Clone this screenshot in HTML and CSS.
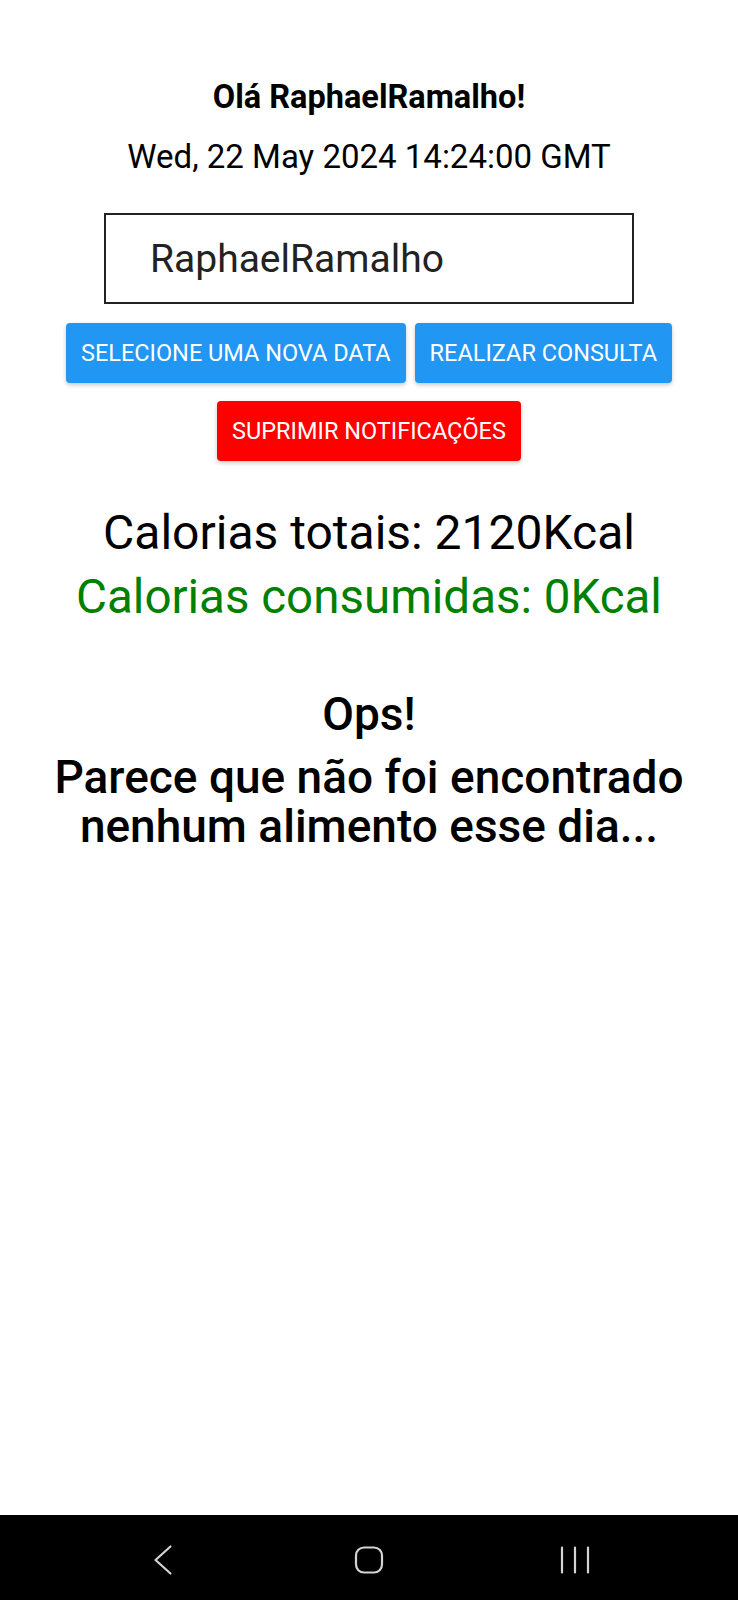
FILE: index.html
```html
<!DOCTYPE html>
<html lang="pt">
<head>
<meta charset="utf-8">
<link rel="stylesheet" href="styles.css">
</head>
<body>
<div class="screen">
  <main class="content">
    <h1 class="greeting">Olá RaphaelRamalho!</h1>
    <p class="date">Wed, 22 May 2024 14:24:00 GMT</p>
    <div class="input-box"><span class="input-text">RaphaelRamalho</span></div>
    <div class="btn-row">
      <button class="btn btn-blue">SELECIONE UMA NOVA DATA</button>
      <button class="btn btn-blue">REALIZAR CONSULTA</button>
    </div>
    <div class="btn-row btn-row-2">
      <button class="btn btn-red">SUPRIMIR NOTIFICAÇÕES</button>
    </div>
    <p class="cal cal-total">Calorias totais: 2120Kcal</p>
    <p class="cal cal-consumed">Calorias consumidas: 0Kcal</p>
    <div class="empty">
      <p class="ops">Ops!</p>
      <p class="msg">Parece que não foi encontrado nenhum alimento esse dia...</p>
    </div>
  </main>
  <nav class="navbar">
    <svg class="nav-icon" width="40" height="40" viewBox="0 0 40 40"><path d="M27.5 6.5 L12.5 20 L27.5 33.5" fill="none" stroke="#d4d4d4" stroke-width="2.2" stroke-linecap="round" stroke-linejoin="round"/></svg>
    <svg class="nav-icon" width="40" height="40" viewBox="0 0 40 40"><rect x="7" y="7.5" width="26" height="25" rx="8" fill="none" stroke="#d4d4d4" stroke-width="2.2"/></svg>
    <svg class="nav-icon" width="40" height="40" viewBox="0 0 40 40"><path d="M7 7.5V32.5M20 7.5V32.5M33 7.5V32.5" fill="none" stroke="#d4d4d4" stroke-width="2.2" stroke-linecap="round"/></svg>
  </nav>
</div>
</body>
</html>
```
FILE: styles.css
```css
* { box-sizing: border-box; }
html, body { margin: 0; padding: 0; background: #fff; }
body { font-family: Roboto, "Noto Sans", sans-serif; color: #000; }
.screen { width: 738px; height: 1600px; display: flex; flex-direction: column; }
.content { flex: 1; display: flex; flex-direction: column; align-items: center; padding-top: 77px; }
.greeting { margin: 0; font-size: 32.5px; font-weight: 700; line-height: 40px; }
.date { margin: 20px 0 0; font-size: 33px; line-height: 40px; }
.input-box { margin-top: 36px; width: 530px; height: 91px; border: 2px solid #222; display: flex; align-items: center; padding-left: 44px; }
.input-text { font-size: 39px; color: #222; }
.btn-row { display: flex; gap: 9px; margin-top: 19px; }
.btn-row-2 { margin-top: 18px; }
.btn { border: none; border-radius: 4px; height: 60px; padding: 0 15px; color: #fff; font-family: Roboto, sans-serif; font-size: 23.5px; box-shadow: 0 2px 4px rgba(0,0,0,0.22); }
.btn-blue { background: #2196f3; }
.btn-red { background: #ff0000; }
.cal { margin: 0; font-size: 48px; line-height: 64px; }
.cal-total { margin-top: 40px; }
.cal-consumed { color: #008000; font-size: 47.5px; }
.empty { margin-top: 60px; text-align: center; }
.ops { margin: 0; font-size: 46px; font-weight: 500; line-height: 50px; }
.msg { margin: 14px auto 0; width: 680px; font-size: 46px; font-weight: 500; line-height: 49px; }
.navbar { height: 85px; background: #000; display: flex; justify-content: center; align-items: center; gap: 166px; padding-top: 4px; }
.nav-icon { display: block; }
```
